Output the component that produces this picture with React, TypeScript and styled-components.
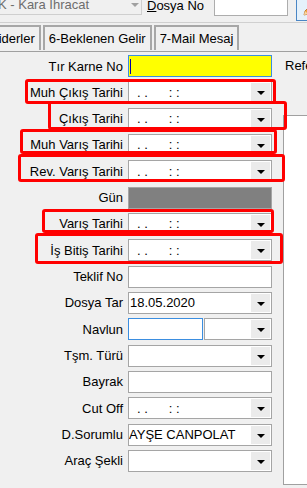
import React from 'react';
import styled, { createGlobalStyle } from 'styled-components';

const GlobalStyle = createGlobalStyle`
  html, body {
    background: #f0f0f0;
    margin: 0;
    padding: 0;
  }
`;

const Screen = styled.div`
  background: #f0f0f0;
  color: #000;
  font-family: "Liberation Sans", Arial, sans-serif;
  font-size: 13px;
  height: 488px;
  overflow: hidden;
  position: relative;
  width: 307px;
`;

const TopBar = styled.div`
  align-items: flex-start;
  border-bottom: 1px solid #d0d0d0;
  box-sizing: border-box;
  display: flex;
  height: 23px;
`;

const KindCombo = styled.div`
  align-items: center;
  border: 1px solid #cfcfcf;
  box-sizing: border-box;
  color: #6d6d6d;
  display: flex;
  flex-shrink: 0;
  height: 23px;
  margin: -8px 0 0 -4px;
  padding: 2px 2px 0 1px;
  white-space: nowrap;
  width: 146px;
`;

const KindText = styled.span`
  flex: 1;
`;

const GreyArrow = styled.span`
  border-left: 4px solid transparent;
  border-right: 4px solid transparent;
  border-top: 4px solid #a0a0a0;
  margin-top: 1px;
`;

const TopLabel = styled.span`
  flex-shrink: 0;
  line-height: 15px;
  margin: -2px 0 0 5px;
  white-space: nowrap;
  width: 67px;
`;

const TopInput = styled.div`
  background: #fff;
  border: 1px solid #adadad;
  box-sizing: border-box;
  flex-shrink: 0;
  height: 25px;
  margin-top: -9px;
  width: 74px;
`;

const EditButton = styled.div`
  align-items: flex-end;
  background: #e5f1fb;
  border: 1px solid #4a86c5;
  box-sizing: border-box;
  display: flex;
  flex-shrink: 0;
  height: 28px;
  margin: -7px 0 0 8px;
  padding: 0 0 3px 5px;
  width: 30px;
`;

const TabStrip = styled.div`
  display: flex;
  gap: 2px;
  height: 25px;
  margin: 2px 0 0 -29px;
`;

const Tab = styled.div`
  align-items: center;
  border: 2px solid #a7a7a7;
  border-bottom: none;
  box-sizing: border-box;
  display: flex;
  flex-shrink: 0;
  padding: 0 4px;
  white-space: nowrap;
`;

const TabLine = styled.div`
  border-top: 1px solid #a0a0a0;
  margin-top: 1px;
`;

const Body = styled.div`
  display: flex;
  margin-top: 3px;
`;

const FormGrid = styled.div`
  column-gap: 4px;
  display: grid;
  flex-shrink: 0;
  grid-auto-rows: 22px;
  grid-template-columns: 124px 144px;
  row-gap: 4.33px;
`;

const Label = styled.span`
  align-self: center;
  line-height: 15px;
  padding-right: 1px;
  text-align: right;
  white-space: nowrap;
`;

const Box = styled.div<{ $bg?: string; $focus?: boolean }>`
  align-items: center;
  background: ${(p) => p.$bg ?? '#fff'};
  border: 1px solid ${(p) => (p.$focus ? '#3b8ee0' : '#a5a5a5')};
  box-sizing: border-box;
  display: flex;
  height: 22px;
  min-width: 0;
  white-space: nowrap;
`;

const Value = styled.span<{ $pad?: number }>`
  flex: 1;
  overflow: hidden;
  padding-left: ${(p) => p.$pad ?? 1}px;
`;

const Caret = styled.span`
  background: #0000aa;
  height: 15px;
  margin-left: 1px;
  width: 1px;
`;

const DropButton = styled.span`
  align-items: center;
  align-self: stretch;
  background: #ebebeb;
  display: flex;
  justify-content: center;
  margin: 1px;
  width: 19px;

  &::after {
    border-left: 4px solid transparent;
    border-right: 4px solid transparent;
    border-top: 4px solid #000;
    content: '';
    margin-top: 2px;
  }
`;

const Mask = styled.span`
  display: flex;
  flex: 1;
  gap: 21px;
  padding-left: 8px;
  white-space: pre;
`;

const Pair = styled.div`
  display: grid;
  gap: 1px;
  grid-template-columns: 75px 1fr;
`;

const RightColumn = styled.div`
  display: flex;
  flex: 1;
  flex-direction: column;
  margin-left: 11px;
  min-width: 0;
`;

const SideLabel = styled.span`
  line-height: 22px;
  padding-left: 2px;
  white-space: nowrap;
`;

const Memo = styled.div`
  background: #fff;
  border: 1px solid #a0a0a0;
  border-right: none;
  height: 368px;
  margin-top: 38px;
`;

const Highlight = styled.div<{ $x: number; $y: number; $w: number; $h: number }>`
  border: 3px solid #ff0000;
  border-radius: 3px;
  box-sizing: border-box;
  height: ${(p) => p.$h}px;
  left: ${(p) => p.$x}px;
  pointer-events: none;
  position: absolute;
  top: ${(p) => p.$y}px;
  width: ${(p) => p.$w}px;
`;

const Pencil = () => (
  <svg width="16" height="16" viewBox="0 0 16 16">
    <path d="M2 14 L3 10 L11 2 L14 5 L6 13 Z" fill="#f2a33a" stroke="#b8661a" strokeWidth="0.8" />
    <path d="M2 14 L3 10 L6 13 Z" fill="#f6d7a6" />
  </svg>
);

const DateCombo = () => (
  <Box>
    <Mask>
      <span>. .</span>
      <span>: :</span>
    </Mask>
    <DropButton />
  </Box>
);

const Combo = ({ value, pad }: { value?: string; pad?: number }) => (
  <Box>
    <Value $pad={pad}>{value}</Value>
    <DropButton />
  </Box>
);

export default function App() {
  return (
    <Screen>
      <GlobalStyle />
      <TopBar>
        <KindCombo>
          <KindText>K - Kara İhracat</KindText>
          <GreyArrow />
        </KindCombo>
        <TopLabel>
          <u>D</u>osya No
        </TopLabel>
        <TopInput />
        <EditButton>
          <Pencil />
        </EditButton>
      </TopBar>

      <TabStrip>
        <Tab>5-Giderler</Tab>
        <Tab>6-Beklenen Gelir</Tab>
        <Tab>7-Mail Mesaj</Tab>
      </TabStrip>
      <TabLine />

      <Body>
        <FormGrid>
          <Label>Tır Karne No</Label>
          <Box $bg="#ffff00" $focus>
            <Caret />
          </Box>

          <Label>Muh Çıkış Tarihi</Label>
          <DateCombo />

          <Label>Çıkış Tarihi</Label>
          <DateCombo />

          <Label>Muh Varış Tarihi</Label>
          <DateCombo />

          <Label>Rev. Varış Tarihi</Label>
          <DateCombo />

          <Label>Gün</Label>
          <Box $bg="#808080" />

          <Label>Varış Tarihi</Label>
          <DateCombo />

          <Label>İş Bitiş Tarihi</Label>
          <DateCombo />

          <Label>Teklif No</Label>
          <Box />

          <Label>Dosya Tar</Label>
          <Combo value="18.05.2020" />

          <Label>Navlun</Label>
          <Pair>
            <Box $focus />
            <Combo />
          </Pair>

          <Label>Tşm. Türü</Label>
          <Combo />

          <Label>Bayrak</Label>
          <Box />

          <Label>Cut Off</Label>
          <DateCombo />

          <Label>D.Sorumlu</Label>
          <Combo value="AYŞE CANPOLAT" pad={0} />

          <Label>Araç Şekli</Label>
          <Combo />
        </FormGrid>

        <RightColumn>
          <SideLabel>Referans No</SideLabel>
          <Memo />
        </RightColumn>
      </Body>

      <Highlight $x={25} $y={79} $w={251} $h={25} />
      <Highlight $x={48} $y={101} $w={239} $h={29} />
      <Highlight $x={20} $y={129} $w={257} $h={25} />
      <Highlight $x={18} $y={154} $w={267} $h={28} />
      <Highlight $x={42} $y={209} $w={232} $h={24} />
      <Highlight $x={35} $y={233} $w={248} $h={31} />
    </Screen>
  );
}
